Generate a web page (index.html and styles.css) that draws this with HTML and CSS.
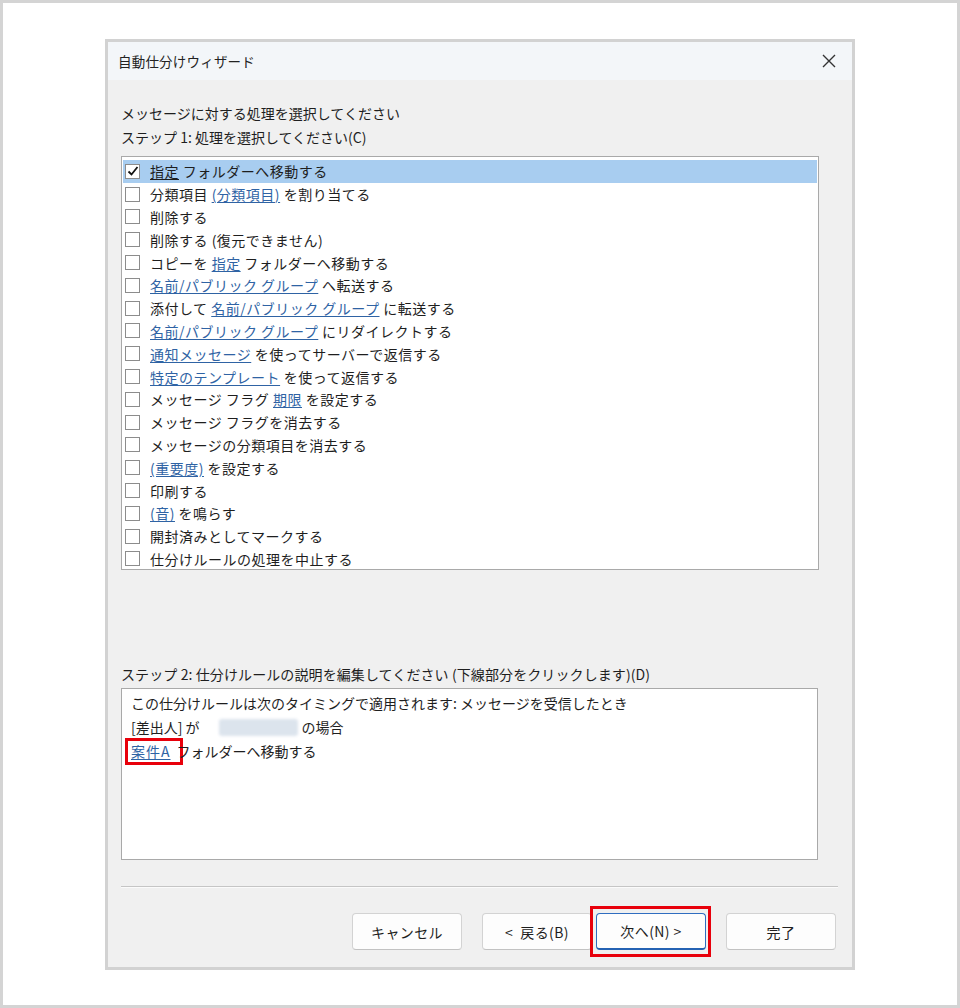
FILE: index.html
```html
<!DOCTYPE html>
<html lang="ja">
<head>
<meta charset="utf-8">
<title>自動仕分けウィザード</title>
<link rel="stylesheet" href="styles.css">
</head>
<body>
<div class="frame">
  <div class="dialog">
    <div class="titlebar">
      <span class="title">自動仕分けウィザード</span>
      <svg class="close" width="14" height="14" viewBox="0 0 14 14"><path d="M1 1 L13 13 M13 1 L1 13" stroke="#333" stroke-width="1.4" fill="none"/></svg>
    </div>
    <div class="body">
      <div class="label intro">メッセージに対する処理を選択してください</div>
      <div class="label">ステップ 1: 処理を選択してください(C)</div>
      <div class="list">
        <div class="row selected"><span class="cb"><svg width="12" height="12" viewBox="0 0 12 12"><path d="M1.5 6.5 L4.5 9.5 L10.5 2" stroke="#111" stroke-width="1.8" fill="none"/></svg></span><span><span class="plain-u">指定</span> フォルダーへ移動する</span></div>
        <div class="row"><span class="cb"></span><span>分類項目 <a class="lnk">(分類項目)</a> を割り当てる</span></div>
        <div class="row"><span class="cb"></span><span>削除する</span></div>
        <div class="row"><span class="cb"></span><span>削除する (復元できません)</span></div>
        <div class="row"><span class="cb"></span><span>コピーを <a class="lnk">指定</a> フォルダーへ移動する</span></div>
        <div class="row"><span class="cb"></span><span><a class="lnk">名前/パブリック グループ</a> へ転送する</span></div>
        <div class="row"><span class="cb"></span><span>添付して <a class="lnk">名前/パブリック グループ</a> に転送する</span></div>
        <div class="row"><span class="cb"></span><span><a class="lnk">名前/パブリック グループ</a> にリダイレクトする</span></div>
        <div class="row"><span class="cb"></span><span><a class="lnk">通知メッセージ</a> を使ってサーバーで返信する</span></div>
        <div class="row"><span class="cb"></span><span><a class="lnk">特定のテンプレート</a> を使って返信する</span></div>
        <div class="row"><span class="cb"></span><span>メッセージ フラグ <a class="lnk">期限</a> を設定する</span></div>
        <div class="row"><span class="cb"></span><span>メッセージ フラグを消去する</span></div>
        <div class="row"><span class="cb"></span><span>メッセージの分類項目を消去する</span></div>
        <div class="row"><span class="cb"></span><span><a class="lnk">(重要度)</a> を設定する</span></div>
        <div class="row"><span class="cb"></span><span>印刷する</span></div>
        <div class="row"><span class="cb"></span><span><a class="lnk">(音)</a> を鳴らす</span></div>
        <div class="row"><span class="cb"></span><span>開封済みとしてマークする</span></div>
        <div class="row"><span class="cb"></span><span>仕分けルールの処理を中止する</span></div>
      </div>
      <div class="label step2">ステップ 2: 仕分けルールの説明を編集してください (下線部分をクリックします)(D)</div>
      <div class="desc">
        <div class="line">この仕分けルールは次のタイミングで適用されます: メッセージを受信したとき</div>
        <div class="line">[差出人] が<span class="blur"></span>の場合</div>
        <div class="line"><span class="mark-box"><a class="lnk">案件A</a></span>フォルダーへ移動する</div>
      </div>
      <div class="sep"></div>
      <div class="buttons">
        <button class="btn">キャンセル</button>
        <button class="btn">&lt;&nbsp;&nbsp;戻る(B)</button>
        <span class="btn-mark"><button class="btn primary">次へ(N) &gt;</button></span>
        <button class="btn">完了</button>
      </div>
    </div>
  </div>
</div>
</body>
</html>
```
FILE: styles.css
```css
* { box-sizing: border-box; }
html, body { margin: 0; padding: 0; }
body {
  font-family: "Noto Sans CJK JP", "Noto Sans", sans-serif;
  color: #1e1e1e;
  background: #fff;
}
.frame {
  width: 960px;
  height: 1008px;
  border: 3px solid #d4d4d4;
  background: #fff;
  padding: 36px 0 0 102px;
}
.dialog {
  width: 750px;
  height: 931px;
  border: 3px solid #d2d2d2;
  background: #f0f0f0;
  display: flex;
  flex-direction: column;
}
.titlebar {
  height: 38px;
  background: #f3f6f9;
  display: flex;
  align-items: center;
  justify-content: space-between;
  padding: 0 16px 0 10px;
  flex-shrink: 0;
}
.title { font-size: 13.5px; color: #222; letter-spacing: 0.2px; }
.close { display: block; }
.body {
  padding: 21px 14px 0 13px;
  display: flex;
  flex-direction: column;
}
.label {
  font-size: 14px;
  line-height: 24px;
  height: 24px;
  white-space: nowrap;
}
.step2 { letter-spacing: 0.1px; }
.list {
  margin-top: 7px;
  width: 698px;
  height: 414px;
  background: #fff;
  border: 1px solid #a9a9a9;
  padding: 3px 1px 0 1px;
}
.row {
  height: 22.8px;
  display: flex;
  align-items: center;
  font-size: 14px;
  letter-spacing: 0.5px;
  white-space: nowrap;
}
.row.selected { background: #a8cdf0; }
.cb {
  width: 15px;
  height: 15px;
  border: 1px solid #8c8c8c;
  background: #fff;
  margin: 0 10px 0 2px;
  display: flex;
  align-items: center;
  justify-content: center;
  flex-shrink: 0;
}
.cb svg { display: block; }
.lnk {
  color: #2f63a4;
  text-decoration: underline;
  text-underline-offset: 2px;
}
.plain-u { text-decoration: underline; text-underline-offset: 2px; }
.step2 { margin-top: 92px; }
.desc {
  margin-top: 2px;
  width: 697px;
  height: 172px;
  background: #fff;
  border: 1px solid #a9a9a9;
  padding: 2px 0 0 9px;
}
.line {
  font-size: 14px;
  line-height: 24px;
  height: 24px;
  white-space: nowrap;
}
.blur {
  display: inline-block;
  width: 79px;
  height: 17px;
  margin: 0 4px 0 19px;
  vertical-align: -3px;
  background: #dce4ed;
  filter: blur(1.5px);
  border-radius: 3px;
}
.mark-box {
  display: inline-block;
  line-height: 21px;
  margin-left: -6px;
  padding: 0 9px 0 3px;
  border: 3px solid #e8000b;
  letter-spacing: 1px;
  vertical-align: top;
  margin-top: -1px;
  margin-right: -6px;
}
.sep {
  margin-top: 26px;
  width: 717px;
  height: 2px;
  border-top: 1px solid #c5c5c5;
  border-bottom: 1px solid #fbfbfb;
}
.buttons {
  margin-top: 18px;
  display: flex;
  align-items: center;
  justify-content: flex-end;
  padding-right: 2px;
  gap: 20px;
  width: 717px;
}
.btn {
  width: 110px;
  height: 37px;
  background: #fdfdfd;
  border: 1px solid #d3d3d3;
  border-bottom-color: #c2c2c2;
  border-radius: 4px;
  font-family: "Noto Sans CJK JP", "Noto Sans", sans-serif;
  font-size: 14px;
  letter-spacing: 0.4px;
  color: #1e1e1e;
  padding: 0;
}
.btn-mark {
  display: flex;
  border: 3px solid #e8000b;
  padding: 4px 2px 4px 3px;
  margin: 0 -5px 0 -22px;
}
.btn.primary {
  display: block;
  border: 1px solid #2f6dc0;
  border-bottom: 2px solid #2462b3;
}
```
